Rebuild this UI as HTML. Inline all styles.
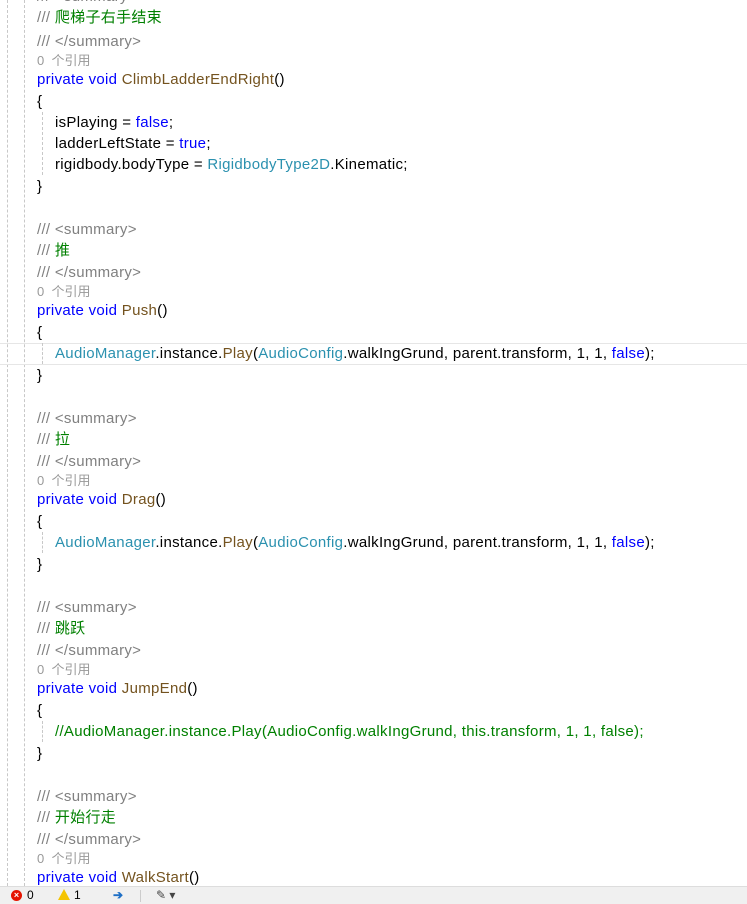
<!DOCTYPE html>
<html><head><meta charset="utf-8"><style>
html,body{margin:0;padding:0;background:#fff;width:747px;height:904px;overflow:hidden;position:relative;font-family:"Liberation Sans","Noto Sans CJK SC",sans-serif;font-size:15px;letter-spacing:0.3px;color:#000}
.l{position:absolute;left:37px;height:21px;line-height:21px;white-space:pre}
.i{left:55px}
.c{color:#808080}.g{color:#008000}.k{color:#0000ff}.m{color:#74531f}.t{color:#2b91af}
.r{color:#999;font-size:13px;letter-spacing:0}
.vg{position:absolute;top:0;bottom:18px;width:0;border-left:1px dashed #c8c8c8}
.hl{position:absolute;left:0;right:0;top:343px;height:20px;border:1px solid #e6e6e6;border-left:none;border-right:none}
.sb{position:absolute;left:0;right:0;top:886px;height:18px;background:#f0f0f0;border-top:1px solid #ddd;font-size:12px;line-height:17px;letter-spacing:0}
.ig{position:absolute;width:1px;height:21px;border-left:1px dashed #c8c8c8;left:42px}
</style></head><body>
<div class="vg" style="left:7px"></div>
<div class="vg" style="left:24px"></div>
<div class="hl"></div>
<div class="ig" style="top:112px;height:63px"></div>
<div class="ig" style="top:343px"></div>
<div class="ig" style="top:532px"></div>
<div class="ig" style="top:721px"></div>

<div class="l c" style="top:-14px">/// &lt;summary&gt;</div>
<div class="l" style="top:7px"><span class="c">/// </span><span class="g">爬梯子右手结束</span></div>
<div class="l c" style="top:31px">/// &lt;/summary&gt;</div>
<div class="l r" style="top:50px">0  个引用</div>
<div class="l" style="top:69px"><span class="k">private void </span><span class="m">ClimbLadderEndRight</span>()</div>
<div class="l" style="top:91px">{</div>
<div class="l i" style="top:112px">isPlaying = <span class="k">false</span>;</div>
<div class="l i" style="top:133px">ladderLeftState = <span class="k">true</span>;</div>
<div class="l i" style="top:154px">rigidbody.bodyType = <span class="t">RigidbodyType2D</span>.Kinematic;</div>
<div class="l" style="top:176px">}</div>

<div class="l c" style="top:219px">/// &lt;summary&gt;</div>
<div class="l" style="top:240px"><span class="c">/// </span><span class="g">推</span></div>
<div class="l c" style="top:262px">/// &lt;/summary&gt;</div>
<div class="l r" style="top:281px">0  个引用</div>
<div class="l" style="top:300px"><span class="k">private void </span><span class="m">Push</span>()</div>
<div class="l" style="top:322px">{</div>
<div class="l i" style="top:343px"><span class="t">AudioManager</span>.instance.<span class="m">Play</span>(<span class="t">AudioConfig</span>.walkIngGrund, parent.transform, 1, 1, <span class="k">false</span>);</div>
<div class="l" style="top:365px">}</div>

<div class="l c" style="top:408px">/// &lt;summary&gt;</div>
<div class="l" style="top:429px"><span class="c">/// </span><span class="g">拉</span></div>
<div class="l c" style="top:451px">/// &lt;/summary&gt;</div>
<div class="l r" style="top:470px">0  个引用</div>
<div class="l" style="top:489px"><span class="k">private void </span><span class="m">Drag</span>()</div>
<div class="l" style="top:511px">{</div>
<div class="l i" style="top:532px"><span class="t">AudioManager</span>.instance.<span class="m">Play</span>(<span class="t">AudioConfig</span>.walkIngGrund, parent.transform, 1, 1, <span class="k">false</span>);</div>
<div class="l" style="top:554px">}</div>

<div class="l c" style="top:597px">/// &lt;summary&gt;</div>
<div class="l" style="top:618px"><span class="c">/// </span><span class="g">跳跃</span></div>
<div class="l c" style="top:640px">/// &lt;/summary&gt;</div>
<div class="l r" style="top:659px">0  个引用</div>
<div class="l" style="top:678px"><span class="k">private void </span><span class="m">JumpEnd</span>()</div>
<div class="l" style="top:700px">{</div>
<div class="l i g" style="top:721px">//AudioManager.instance.Play(AudioConfig.walkIngGrund, this.transform, 1, 1, false);</div>
<div class="l" style="top:743px">}</div>

<div class="l c" style="top:786px">/// &lt;summary&gt;</div>
<div class="l" style="top:807px"><span class="c">/// </span><span class="g">开始行走</span></div>
<div class="l c" style="top:829px">/// &lt;/summary&gt;</div>
<div class="l r" style="top:848px">0  个引用</div>
<div class="l" style="top:867px"><span class="k">private void </span><span class="m">WalkStart</span>()</div>

<div class="sb">
<span style="position:absolute;left:11px;top:3px;width:11px;height:11px;border-radius:50%;background:#e51400;color:#fff;font-size:9px;line-height:11px;text-align:center;font-weight:bold">×</span>
<span style="position:absolute;left:27px;top:0">0</span>
<span style="position:absolute;left:58px;top:2px;width:0;height:0;border-left:6px solid transparent;border-right:6px solid transparent;border-bottom:11px solid #f5c400"></span>
<span style="position:absolute;left:74px;top:0">1</span>
<span style="position:absolute;left:113px;top:0;color:#1e6fc5;font-weight:bold">➔</span>
<span style="position:absolute;left:140px;top:3px;width:1px;height:12px;background:#ccc"></span>
<span style="position:absolute;left:156px;top:0;color:#444">✎ ▾</span>
</div>
</body></html>
